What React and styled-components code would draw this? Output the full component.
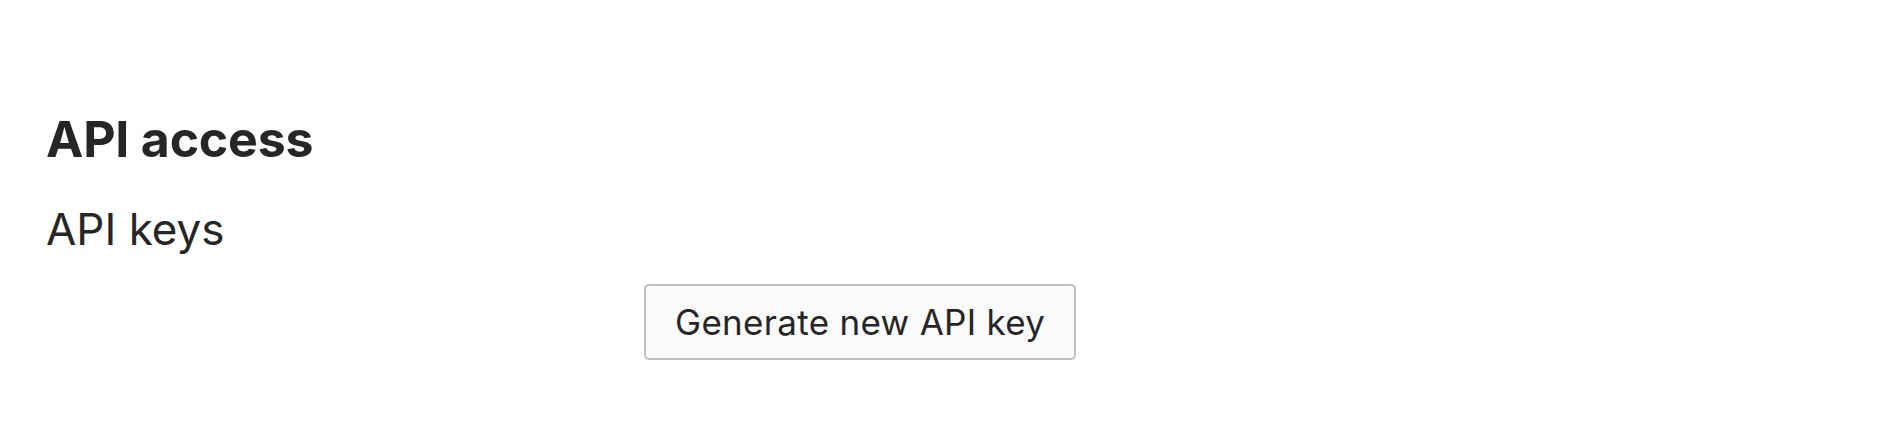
import React from 'react';
import styled, { createGlobalStyle } from 'styled-components';

const GlobalStyle = createGlobalStyle`
    html, body {
        margin: 0;
        padding: 0;
        background: #ffffff;
    }
    body {
        font-family: Inter, "Noto Sans", "Liberation Sans", sans-serif;
        color: #262626;
    }
`;

const Page = styled.div`
    padding: 109px 46px 0 46px;
`;

const Heading = styled.h2`
    margin: 0;
    font-size: 50px;
    font-weight: 700;
    line-height: 60px;
    letter-spacing: -0.2px;
`;

const SubHeading = styled.h3`
    margin: 34px 0 0 0;
    font-size: 44px;
    font-weight: 400;
    line-height: 52px;
`;

const ActionRow = styled.div`
    display: flex;
    padding-left: 598px;
    margin-top: 29px;
`;

const Button = styled.button`
    height: 76px;
    padding: 0 29px;
    font-family: inherit;
    font-size: 35px;
    letter-spacing: 0.3px;
    color: #262626;
    background: #fafafa;
    border: 2px solid #bfbfbf;
    border-radius: 5px;
    cursor: pointer;
`;

export default function App() {
    return (
        <>
            <GlobalStyle />
            <Page>
                <Heading>API access</Heading>
                <SubHeading>API keys</SubHeading>
                <ActionRow>
                    <Button>Generate new API key</Button>
                </ActionRow>
            </Page>
        </>
    );
}
